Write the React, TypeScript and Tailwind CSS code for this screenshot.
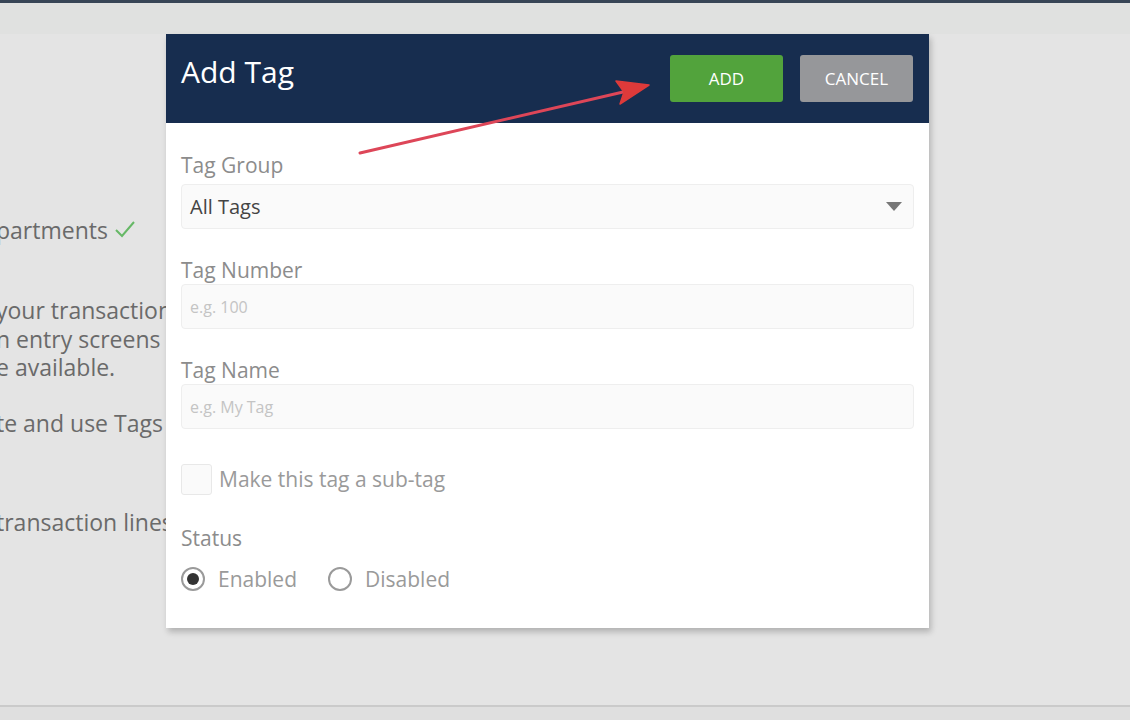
import React from "react";

const font = { fontFamily: '"Open Sans", "Noto Sans", sans-serif' };

function Radio({ checked, label }: { checked?: boolean; label: string }) {
  return (
    <label className="flex items-center gap-[13px]">
      <span className="flex h-[24px] w-[24px] items-center justify-center rounded-full border-2 border-[#9a9a9a] bg-white">
        {checked && <span className="h-[12px] w-[12px] rounded-full bg-[#333]" />}
      </span>
      <span className="text-[21px] text-[#9a9a9a]">{label}</span>
    </label>
  );
}

function Field({ label, placeholder }: { label: string; placeholder: string }) {
  return (
    <div className="flex flex-col">
      <span className="text-[21px] leading-[28px] text-[#8c8c8c]">{label}</span>
      <div className="flex h-[45px] items-center rounded-[4px] border border-[#eeeeee] bg-[#fafafa] px-[8px] text-[16px] text-[#c4c4c4]">
        {placeholder}
      </div>
    </div>
  );
}

export default function App() {
  return (
    <div className="relative h-[720px] w-[1130px] overflow-hidden bg-[#e4e4e4]" style={font}>
      <div className="h-[3px] bg-[#384556]" />
      <div className="h-[31px] bg-[#e0e1e0]" />

      <div className="ml-[-4px] flex flex-col text-[23px] text-[#6a6a6a]">
        <div className="mt-[182px] flex items-center gap-[6px] leading-[28px]">
          partments
          <svg width="22" height="18" viewBox="0 0 22 18" className="mt-[-2px]">
            <path d="M2 10 L8 16 L20 2" fill="none" stroke="#66b866" strokeWidth="2" />
          </svg>
        </div>
        <div className="mt-[52px] leading-[28.5px]">
          <div>your transactions</div>
          <div>n entry screens</div>
          <div>e available.</div>
        </div>
        <div className="mt-[27px] leading-[28px]">te and use Tags</div>
        <div className="mt-[71px] leading-[28px]">transaction lines</div>
      </div>

      <div className="absolute bottom-0 left-0 right-0 h-[15px] border-t-[2px] border-[#cacaca] bg-[#dfdfdf]" />

      <div className="absolute left-[166px] top-[34px] w-[763px] bg-white shadow-[2px_4px_6px_rgba(0,0,0,0.22)]">
        <div className="flex h-[89px] items-center justify-between bg-[#172d4f] pl-[15px] pr-[16px]">
          <span className="mt-[-14px] text-[30px] text-white">Add Tag</span>
          <div className="flex gap-[17px]">
            <button className="h-[47px] w-[113px] rounded-[3px] bg-[#52a33c] text-[17px] text-white">ADD</button>
            <button className="h-[47px] w-[113px] rounded-[3px] bg-[#96979a] text-[17px] text-white">CANCEL</button>
          </div>
        </div>

        <div className="flex flex-col px-[15px] pb-[33px] pt-[28px]">
          <div className="flex flex-col">
            <span className="text-[21px] leading-[28px] text-[#8c8c8c]">Tag Group</span>
            <div className="mt-[5px] flex h-[45px] items-center justify-between rounded-[4px] border border-[#eeeeee] bg-[#fafafa] pl-[8px] pr-[11px] text-[20px] text-[#444]">
              All Tags
              <svg width="16" height="9" viewBox="0 0 16 9">
                <path d="M0 0 L16 0 L8 9 Z" fill="#777" />
              </svg>
            </div>
          </div>
          <div className="mt-[27px]">
            <Field label="Tag Number" placeholder="e.g. 100" />
          </div>
          <div className="mt-[27px]">
            <Field label="Tag Name" placeholder="e.g. My Tag" />
          </div>
          <label className="mt-[35px] flex items-center gap-[7px]">
            <span className="h-[31px] w-[31px] rounded-[3px] border border-[#e8e8e8] bg-[#fafafa]" />
            <span className="text-[21px] text-[#9a9a9a]">Make this tag a sub-tag</span>
          </label>
          <span className="mt-[28px] text-[21px] leading-[28px] text-[#8c8c8c]">Status</span>
          <div className="mt-[12px] flex gap-[31px]">
            <Radio checked label="Enabled" />
            <Radio label="Disabled" />
          </div>
        </div>
      </div>

      <svg className="absolute left-0 top-0" width="1130" height="720" viewBox="0 0 1130 720">
        <line x1="360" y1="153" x2="636" y2="89" stroke="#dd4658" strokeWidth="3" strokeLinecap="round" />
        <path d="M649 85 L616 81 L624 92 L620 104 Z" fill="#dd3a3a" stroke="#dd3a3a" strokeWidth="1.5" strokeLinejoin="round" />
      </svg>
    </div>
  );
}
